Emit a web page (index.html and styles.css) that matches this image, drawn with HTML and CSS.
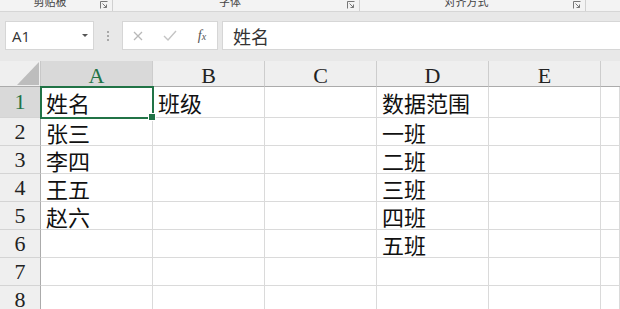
FILE: index.html
```html
<!DOCTYPE html>
<html lang="zh-CN">
<head>
<meta charset="utf-8">
<title>Excel</title>
<link rel="stylesheet" href="styles.css">
</head>
<body>
<div class="ribbon">
  <div class="grp g1"><span class="glabel">剪贴板</span><svg class="launch" viewBox="0 0 8 8"><path d="M0.5 7.5V0.5H7.5M2.5 2.5L6.5 6.5M3.5 6.5H6.5V3.5" fill="none" stroke="#777" stroke-width="1"/></svg></div>
  <div class="grp g2"><span class="glabel">字体</span><svg class="launch" viewBox="0 0 8 8"><path d="M0.5 7.5V0.5H7.5M2.5 2.5L6.5 6.5M3.5 6.5H6.5V3.5" fill="none" stroke="#777" stroke-width="1"/></svg></div>
  <div class="grp g3"><span class="glabel">对齐方式</span><svg class="launch" viewBox="0 0 8 8"><path d="M0.5 7.5V0.5H7.5M2.5 2.5L6.5 6.5M3.5 6.5H6.5V3.5" fill="none" stroke="#777" stroke-width="1"/></svg></div>
  <div class="grp g4"></div>
</div>
<div class="fbar">
  <div class="namebox"><span class="ref">A1</span><svg class="drop" viewBox="0 0 6 3"><path d="M0 0H6L3 3Z" fill="#555"/></svg></div>
  <div class="dots"><i></i><i></i><i></i></div>
  <div class="fbtns">
    <span class="fb"><svg viewBox="0 0 10 10" width="10" height="10"><path d="M1 1L9 9M9 1L1 9" stroke="#b8b8b8" stroke-width="1.3"/></svg></span>
    <span class="fb"><svg viewBox="0 0 14 11" width="14" height="11"><path d="M1 6L5 10L13 1" fill="none" stroke="#c4c4c4" stroke-width="1.4"/></svg></span>
    <span class="fb fx"><i>f<small>x</small></i></span>
  </div>
  <div class="finput">姓名</div>
</div>
<div class="sheet">
  <div class="corner"><svg viewBox="0 0 40 25" width="40" height="25"><path d="M39 1V24H17Z" fill="#bdbdbd"/></svg></div>
  <div class="h sel">A</div><div class="h">B</div><div class="h">C</div><div class="h">D</div><div class="h">E</div><div class="h last"></div>

  <div class="r sel">1</div><div class="c a1">姓名</div><div class="c">班级</div><div class="c"></div><div class="c">数据范围</div><div class="c"></div><div class="c"></div>
  <div class="r">2</div><div class="c">张三</div><div class="c"></div><div class="c"></div><div class="c">一班</div><div class="c"></div><div class="c"></div>
  <div class="r">3</div><div class="c">李四</div><div class="c"></div><div class="c"></div><div class="c">二班</div><div class="c"></div><div class="c"></div>
  <div class="r">4</div><div class="c">王五</div><div class="c"></div><div class="c"></div><div class="c">三班</div><div class="c"></div><div class="c"></div>
  <div class="r">5</div><div class="c">赵六</div><div class="c"></div><div class="c"></div><div class="c">四班</div><div class="c"></div><div class="c"></div>
  <div class="r">6</div><div class="c"></div><div class="c"></div><div class="c"></div><div class="c">五班</div><div class="c"></div><div class="c"></div>
  <div class="r">7</div><div class="c"></div><div class="c"></div><div class="c"></div><div class="c"></div><div class="c"></div><div class="c"></div>
  <div class="r">8</div><div class="c"></div><div class="c"></div><div class="c"></div><div class="c"></div><div class="c"></div><div class="c"></div>
</div>
</body>
</html>
```
FILE: styles.css
```css
* { box-sizing: border-box; }
html, body { margin: 0; padding: 0; }
body {
  width: 620px;
  height: 309px;
  overflow: hidden;
  background: #fff;
  font-family: "Noto Sans CJK SC", "Noto Sans", sans-serif;
}

/* ribbon group labels */
.ribbon {
  display: flex;
  height: 12px;
  background: #f3f3f3;
  border-bottom: 1px solid #d6d6d6;
  overflow: hidden;
}
.grp {
  display: flex;
  border-right: 1px solid #d0d0d0;
}
.g1 { width: 113px; }
.g2 { width: 247px; }
.g3 { width: 226px; }
.g4 { flex: 1; border-right: none; }
.glabel {
  flex: 1;
  text-align: center;
  font-size: 11px;
  line-height: 11px;
  margin-top: -4px;
  color: #444;
}
.launch {
  width: 8px;
  height: 8px;
  margin: 1px 4px 0 0;
}

/* formula bar */
.fbar {
  display: flex;
  height: 49px;
  padding: 9px 0 11px;
  background: #e8e8e8;
}
.namebox {
  width: 89px;
  margin-left: 5px;
  background: #fff;
  border: 1px solid #d6d6d6;
  display: flex;
  align-items: center;
  justify-content: space-between;
  padding: 0 5px 0 6px;
}
.ref {
  font-family: "Open Sans", "Liberation Sans", sans-serif;
  font-size: 15px;
  color: #333;
}
.drop { width: 6px; height: 3px; }
.dots {
  width: 28px;
  display: flex;
  flex-direction: column;
  align-items: center;
  justify-content: center;
  gap: 2px;
}
.dots i {
  width: 2px;
  height: 2px;
  background: #a8a8a8;
}
.fbtns {
  width: 96px;
  background: #fff;
  border: 1px solid #d6d6d6;
  display: flex;
  align-items: center;
  padding-left: 5px;
  gap: 12px;
}
.fb {
  width: 20px;
  display: flex;
  justify-content: center;
  align-items: center;
}
.fx {
  font-family: "Liberation Serif", serif;
  font-size: 14px;
  color: #555;
}
.fx small { font-size: 10px; }
.finput {
  flex: 1;
  margin-left: 4px;
  background: #fff;
  border: 1px solid #d6d6d6;
  border-right: none;
  display: flex;
  align-items: center;
  padding-left: 10px;
  font-size: 18px;
  color: #333;
}

/* sheet grid */
.sheet {
  display: grid;
  grid-template-columns: 41px repeat(5, 112px) 1fr;
  grid-template-rows: 26px 31px repeat(7, 28px);
}
.corner {
  background: #efefef;
  border-right: 1px solid #c8c8c8;
  border-bottom: 1px solid #ababab;
  overflow: hidden;
}
.corner svg { display: block; }
.h {
  background: #efefef;
  border-right: 1px solid #cdcdcd;
  border-bottom: 1px solid #ababab;
  display: flex;
  justify-content: center;
  align-items: flex-end;
  font-family: "Liberation Serif", serif;
  font-size: 22px;
  line-height: 20px;
  color: #222;
}
.h.last { border-right: none; }
.r {
  background: #efefef;
  border-right: 1px solid #ababab;
  border-bottom: 1px solid #d4d4d4;
  display: flex;
  justify-content: center;
  align-items: center;
  font-family: "Liberation Serif", serif;
  font-size: 22px;
  color: #222;
}
.sel {
  background: #d9d9d9;
  color: #217346;
}
.c {
  border-right: 1px solid #dadada;
  border-bottom: 1px solid #dadada;
  display: flex;
  align-items: center;
  padding-left: 5px;
  font-size: 22px;
  line-height: 26px;
  color: #111;
  white-space: nowrap;
}
.a1 {
  position: relative;
  z-index: 1;
  outline: 2px solid #217346;
  outline-offset: -1px;
}
.a1::after {
  content: "";
  position: absolute;
  right: -4px;
  bottom: -4px;
  width: 6px;
  height: 6px;
  background: #217346;
  border: 1px solid #fff;
}
```
